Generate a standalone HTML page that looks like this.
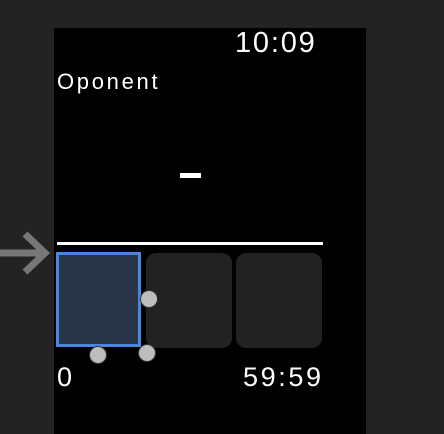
<!DOCTYPE html>
<html><head><style>
body{margin:0;width:444px;height:434px;background:#232323;position:relative;overflow:hidden;font-family:"Liberation Sans",sans-serif;color:#fff}
.a{position:absolute}
.h{position:absolute;width:16px;height:16px;border-radius:50%;background:#bdbdbd;border:1px solid #333;transform:translate(-9px,-9px)}
</style></head><body>
<div class="a" style="left:54px;top:28px;width:312px;height:406px;background:#000"></div>
<div class="a" style="left:235px;top:26px;font-size:29px;line-height:34px;letter-spacing:1.8px">10:09</div>
<div class="a" style="left:57px;top:69px;font-size:22px;line-height:26px;letter-spacing:2.7px">Oponent</div>
<div class="a" style="left:180px;top:173px;width:21px;height:5px;background:#fff"></div>
<div class="a" style="left:57px;top:242px;width:266px;height:3px;background:#fff"></div>
<svg class="a" style="left:0;top:230px" width="52" height="46"><path d="M0 23H45M25 4L45 23L25 42" stroke="#777" stroke-width="7" fill="none"/></svg>
<div class="a" style="left:146px;top:253px;width:86px;height:95px;border-radius:10px;background:#222"></div>
<div class="a" style="left:236px;top:253px;width:86px;height:95px;border-radius:10px;background:#222"></div>
<div class="a" style="left:56px;top:252px;width:79px;height:89px;border:3px solid #4a86e0;background:#2b3548"></div>
<div class="h" style="left:149px;top:299px"></div>
<div class="h" style="left:98px;top:355px"></div>
<div class="h" style="left:147px;top:353px"></div>
<div class="a" style="left:57px;top:362px;font-size:27px;line-height:30px">0</div>
<div class="a" style="left:243px;top:362px;font-size:27px;line-height:30px;letter-spacing:2.6px">59:59</div>
</body></html>
